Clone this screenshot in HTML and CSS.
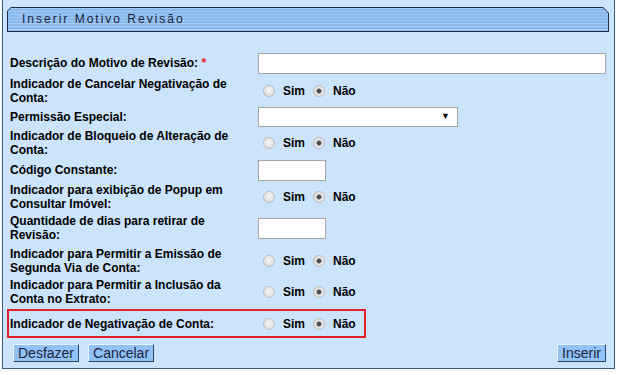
FILE: index.html
```html
<!DOCTYPE html>
<html lang="pt-BR">
<head>
  <meta charset="UTF-8" />
  <title>Inserir Motivo Revisão</title>
  <link rel="stylesheet" href="styles.css">
</head>
<body>
  <div class="panel">
    <div class="titlebar"><div class="titlebar-in">Inserir Motivo Revisão</div></div>

    <div class="form">
      <div class="row r1">
        <label>Descrição do Motivo de Revisão: <span class="req">*</span></label>
        <div class="ctl"><input type="text" class="txt txt-long"></div>
      </div>
      <div class="row r2">
        <label>Indicador de Cancelar Negativação de Conta:</label>
        <div class="ctl radios">
          <input type="radio" name="canc"><span>Sim</span>
          <input type="radio" name="canc" checked><span>Não</span>
        </div>
      </div>
      <div class="row r3">
        <label>Permissão Especial:</label>
        <div class="ctl"><span class="sel"><select></select></span></div>
      </div>
      <div class="row r4">
        <label>Indicador de Bloqueio de Alteração de Conta:</label>
        <div class="ctl radios">
          <input type="radio" name="bloq"><span>Sim</span>
          <input type="radio" name="bloq" checked><span>Não</span>
        </div>
      </div>
      <div class="row r5">
        <label>Código Constante:</label>
        <div class="ctl"><input type="text" class="txt txt-short"></div>
      </div>
      <div class="row r6">
        <label>Indicador para exibição de Popup em Consultar Imóvel:</label>
        <div class="ctl radios">
          <input type="radio" name="popup"><span>Sim</span>
          <input type="radio" name="popup" checked><span>Não</span>
        </div>
      </div>
      <div class="row r7">
        <label>Quantidade de dias para retirar de Revisão:</label>
        <div class="ctl"><input type="text" class="txt txt-short"></div>
      </div>
      <div class="row r8">
        <label>Indicador para Permitir a Emissão de Segunda Via de Conta:</label>
        <div class="ctl radios">
          <input type="radio" name="via"><span>Sim</span>
          <input type="radio" name="via" checked><span>Não</span>
        </div>
      </div>
      <div class="row r9">
        <label>Indicador para Permitir a Inclusão da Conta no Extrato:</label>
        <div class="ctl radios">
          <input type="radio" name="extr"><span>Sim</span>
          <input type="radio" name="extr" checked><span>Não</span>
        </div>
      </div>
      <div class="row row-marked">
        <label>Indicador de Negativação de Conta:</label>
        <div class="ctl radios">
          <input type="radio" name="neg"><span>Sim</span>
          <input type="radio" name="neg" checked><span>Não</span>
        </div>
      </div>
    </div>

    <div class="actions">
      <button>Desfazer</button>
      <button>Cancelar</button>
      <button class="right">Inserir</button>
    </div>
  </div>
</body>
</html>
```

FILE: styles.css
```css
body { margin: 0; background: #fff; font-family: "Liberation Sans", Arial, sans-serif; color: #000; }
.panel {
  margin-left: 2px; width: 611px;
  background: #cbe3fb; border: 1px solid #3a5878; border-top: none;
  padding: 7px 0 6px 0;
}
.titlebar {
  margin: 0 5px 0 4px; height: 25px; background: #1c2c44; padding: 1px; box-sizing: border-box;
  clip-path: polygon(4px 0, calc(100% - 6px) 0, 100% 6px, 100% 100%, 0 100%, 0 4px);
}
.titlebar-in {
  height: 100%;
  background: repeating-linear-gradient(to bottom, #a3cbf4 0 1px, #89b8ec 1px 3px);
  clip-path: polygon(3px 0, calc(100% - 5px) 0, 100% 5px, 100% 100%, 0 100%, 0 3px);
  font-size: 12px; letter-spacing: 2px; color: #15233c;
  line-height: 23px; padding-left: 14px;
}
.form { margin-top: 18px; }
.row {
  display: grid; grid-template-columns: 248px 1fr; align-items: center;
  min-height: 30px;
}
.r1 { min-height: 26px; }
.r3 { min-height: 22px; }
.r5 { min-height: 24px; }
.r7 { min-height: 32px; }
.r8 { min-height: 34px; }
.r9 { min-height: 28px; }
.row label {
  font-size: 12px; font-weight: bold; line-height: 14px; padding-left: 7px; padding-right: 4px;
}
.req { color: #e0202a; }
.ctl { padding-left: 7px; }
.txt {
  display: block; height: 21px; box-sizing: border-box; margin: 0;
  border: 1px solid #a5a5a5; background: #fff; padding: 0 3px;
}
.txt-long { width: 348px; }
.txt-short { width: 68px; }
.sel { display: block; position: relative; width: 200px; }
.sel select {
  appearance: none; -webkit-appearance: none; display: block;
  width: 200px; height: 20px; margin: 0; border: 1px solid #a5a5a5; background: #fff;
}
.sel::after {
  content: "\25BC"; position: absolute; right: 8px; top: 4px; font-size: 9px; color: #111;
}
.radios { display: flex; align-items: center; font-size: 12px; font-weight: bold; line-height: 14px; }
.radios input {
  appearance: none; -webkit-appearance: none; margin: 0 0 0 5px;
  width: 12px; height: 12px; border-radius: 50%; border: 1px solid #bcbcbc;
  background: radial-gradient(circle at 50% 40%, #f6f6f6, #d6d6d6);
}
.radios input:checked {
  background: radial-gradient(circle, #505050 0 2px, #ececec 3px, #d2d2d2);
}
.radios span { margin-left: 8px; }
.radios span + input { margin-left: 8px; }
.row-marked {
  width: 355px; min-height: 25px; margin: 3px 0 0 4px; border: 2px solid #e0202a;
  grid-template-columns: 242px 1fr;
}
.row-marked label { padding-left: 1px; }
.actions { display: flex; gap: 9px; padding: 6px 8px 0 10px; }
.actions button {
  font-family: "Liberation Sans", Arial, sans-serif; font-size: 14px; color: #1a2440;
  height: 18px; line-height: 14px; padding: 0 4px; margin: 0;
  background: #90c2f6; border: 1px solid; border-color: #e6f2ff #2d4a6b #2d4a6b #e6f2ff;
}
.actions .right { margin-left: auto; }
```
